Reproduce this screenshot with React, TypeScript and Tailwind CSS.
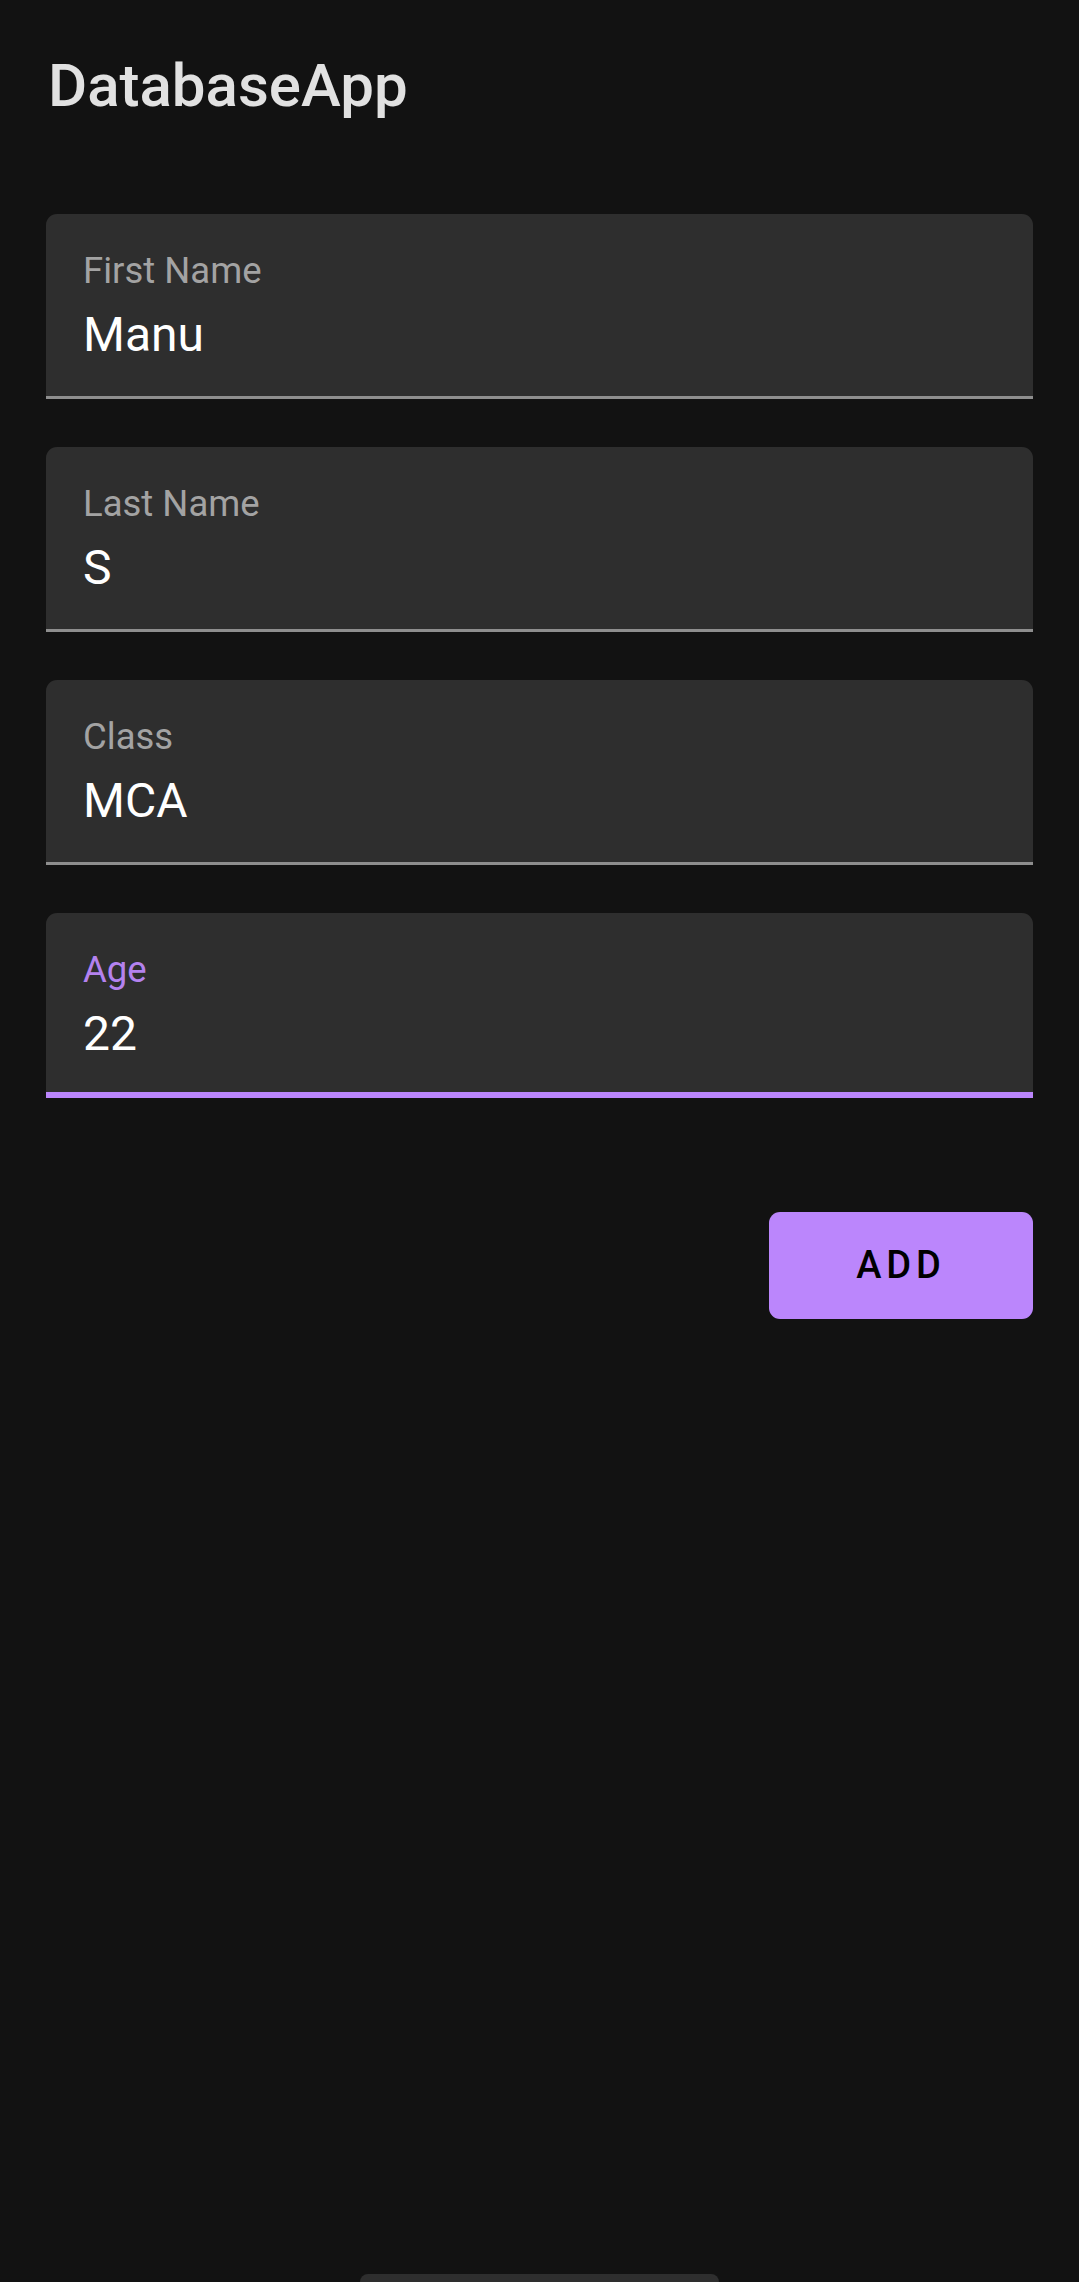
import React, { useState } from "react";

type Field = {
  key: string;
  label: string;
  value: string;
};

const initialFields: Field[] = [
  { key: "first", label: "First Name", value: "Manu" },
  { key: "last", label: "Last Name", value: "S" },
  { key: "cls", label: "Class", value: "MCA" },
  { key: "age", label: "Age", value: "22" },
];

const TextField: React.FC<{
  field: Field;
  focused: boolean;
  onFocus: () => void;
  onChange: (v: string) => void;
}> = ({ field, focused, onFocus, onChange }) => {
  return (
    <label
      className={
        focused
          ? "block h-[185px] rounded-t-[11px] bg-[#2e2e2e] border-b-[6px] border-[#bb86fc] pl-[37px] pr-[37px]"
          : "block h-[185px] rounded-t-[11px] bg-[#2e2e2e] border-b-[3px] border-[#8e8e8e] pl-[37px] pr-[37px]"
      }
    >
      <span
        className={
          focused
            ? "block pt-[38px] text-[36.5px] leading-[37px] text-[#b482ef]"
            : "block pt-[38px] text-[36.5px] leading-[37px] text-[#a3a3a3]"
        }
      >
        {field.label}
      </span>
      <input
        value={field.value}
        onFocus={onFocus}
        onChange={(e) => onChange(e.target.value)}
        className="block mt-[21px] w-full h-[48px] bg-transparent outline-none text-[48px] leading-[48px] text-white caret-[#bb86fc]"
        type="text"
      />
    </label>
  );
};

export default function App() {
  const [fields, setFields] = useState<Field[]>(initialFields);
  const [focused, setFocused] = useState("age");

  return (
    <div
      className="min-h-[2282px] bg-[#121212] flex flex-col"
      style={{ fontFamily: "Roboto, 'Noto Sans', sans-serif" }}
    >
      <h1 className="pt-[56px] pl-[48px] text-[60px] leading-[60px] font-medium text-[#e1e1e1]">
        DatabaseApp
      </h1>

      <form
        onSubmit={(e) => e.preventDefault()}
        className="mt-[98px] px-[46px] flex flex-col gap-[48px]"
      >
        {fields.map((f) => (
          <TextField
            key={f.key}
            field={f}
            focused={focused === f.key}
            onFocus={() => setFocused(f.key)}
            onChange={(v) =>
              setFields((prev) =>
                prev.map((p) => (p.key === f.key ? { ...p, value: v } : p))
              )
            }
          />
        ))}

        <div className="flex justify-end mt-[66px]">
          <button
            type="submit"
            className="w-[264px] h-[107px] rounded-[11px] bg-[#bb86fc] text-[#000000] text-[38px] font-medium tracking-[0.13em] flex items-center justify-center"
          >
            ADD
          </button>
        </div>
      </form>

      <div className="mt-auto flex justify-center">
        <div className="w-[359px] h-[8px] rounded-t-full bg-[#2e2e2e]" />
      </div>
    </div>
  );
}
